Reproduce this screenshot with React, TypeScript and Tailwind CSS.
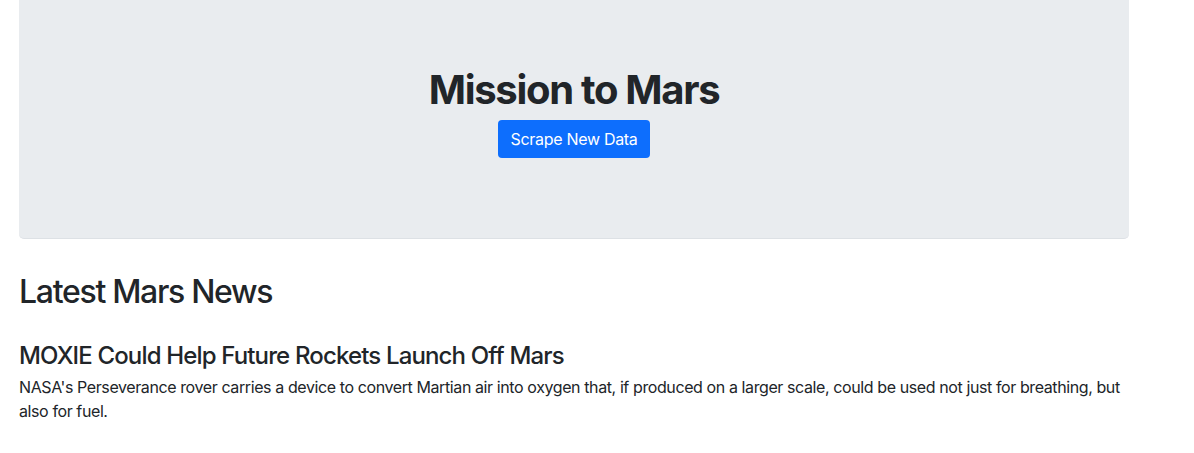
export default function App() {
  return (
    <div className="min-h-screen bg-white text-[#212529] font-['Inter','Liberation_Sans',sans-serif]">
      <div className="ml-[19px] w-[1110px]">
        <div className="mb-[34px] rounded-b-[5px] border-b border-[#dde1e5] bg-[#e9ecef] px-8 pt-[66px] pb-16 text-center">
          <h1 className="mb-[6px] text-[40px] font-bold leading-[48px] tracking-[-1.3px]">Mission to Mars</h1>
          <p className="mb-4">
            <button className="h-[38px] rounded-[4px] bg-[#0d6efd] px-3 text-base leading-6 tracking-[-0.3px] text-white">
              Scrape New Data
            </button>
          </p>
        </div>

        <h2 className="text-[32px] font-medium leading-[38px] tracking-[-1.3px]">Latest Mars News</h2>
        <h4 className="mt-[30px] mb-[5px] text-2xl font-medium leading-[29px] tracking-[-0.85px]">
          MOXIE Could Help Future Rockets Launch Off Mars
        </h4>
        <p className="text-base leading-6 tracking-[-0.4px]">
          NASA's Perseverance rover carries a device to convert Martian air into oxygen that, if produced on a larger
          scale, could be used not just for breathing, but also for fuel.
        </p>
      </div>
    </div>
  )
}
